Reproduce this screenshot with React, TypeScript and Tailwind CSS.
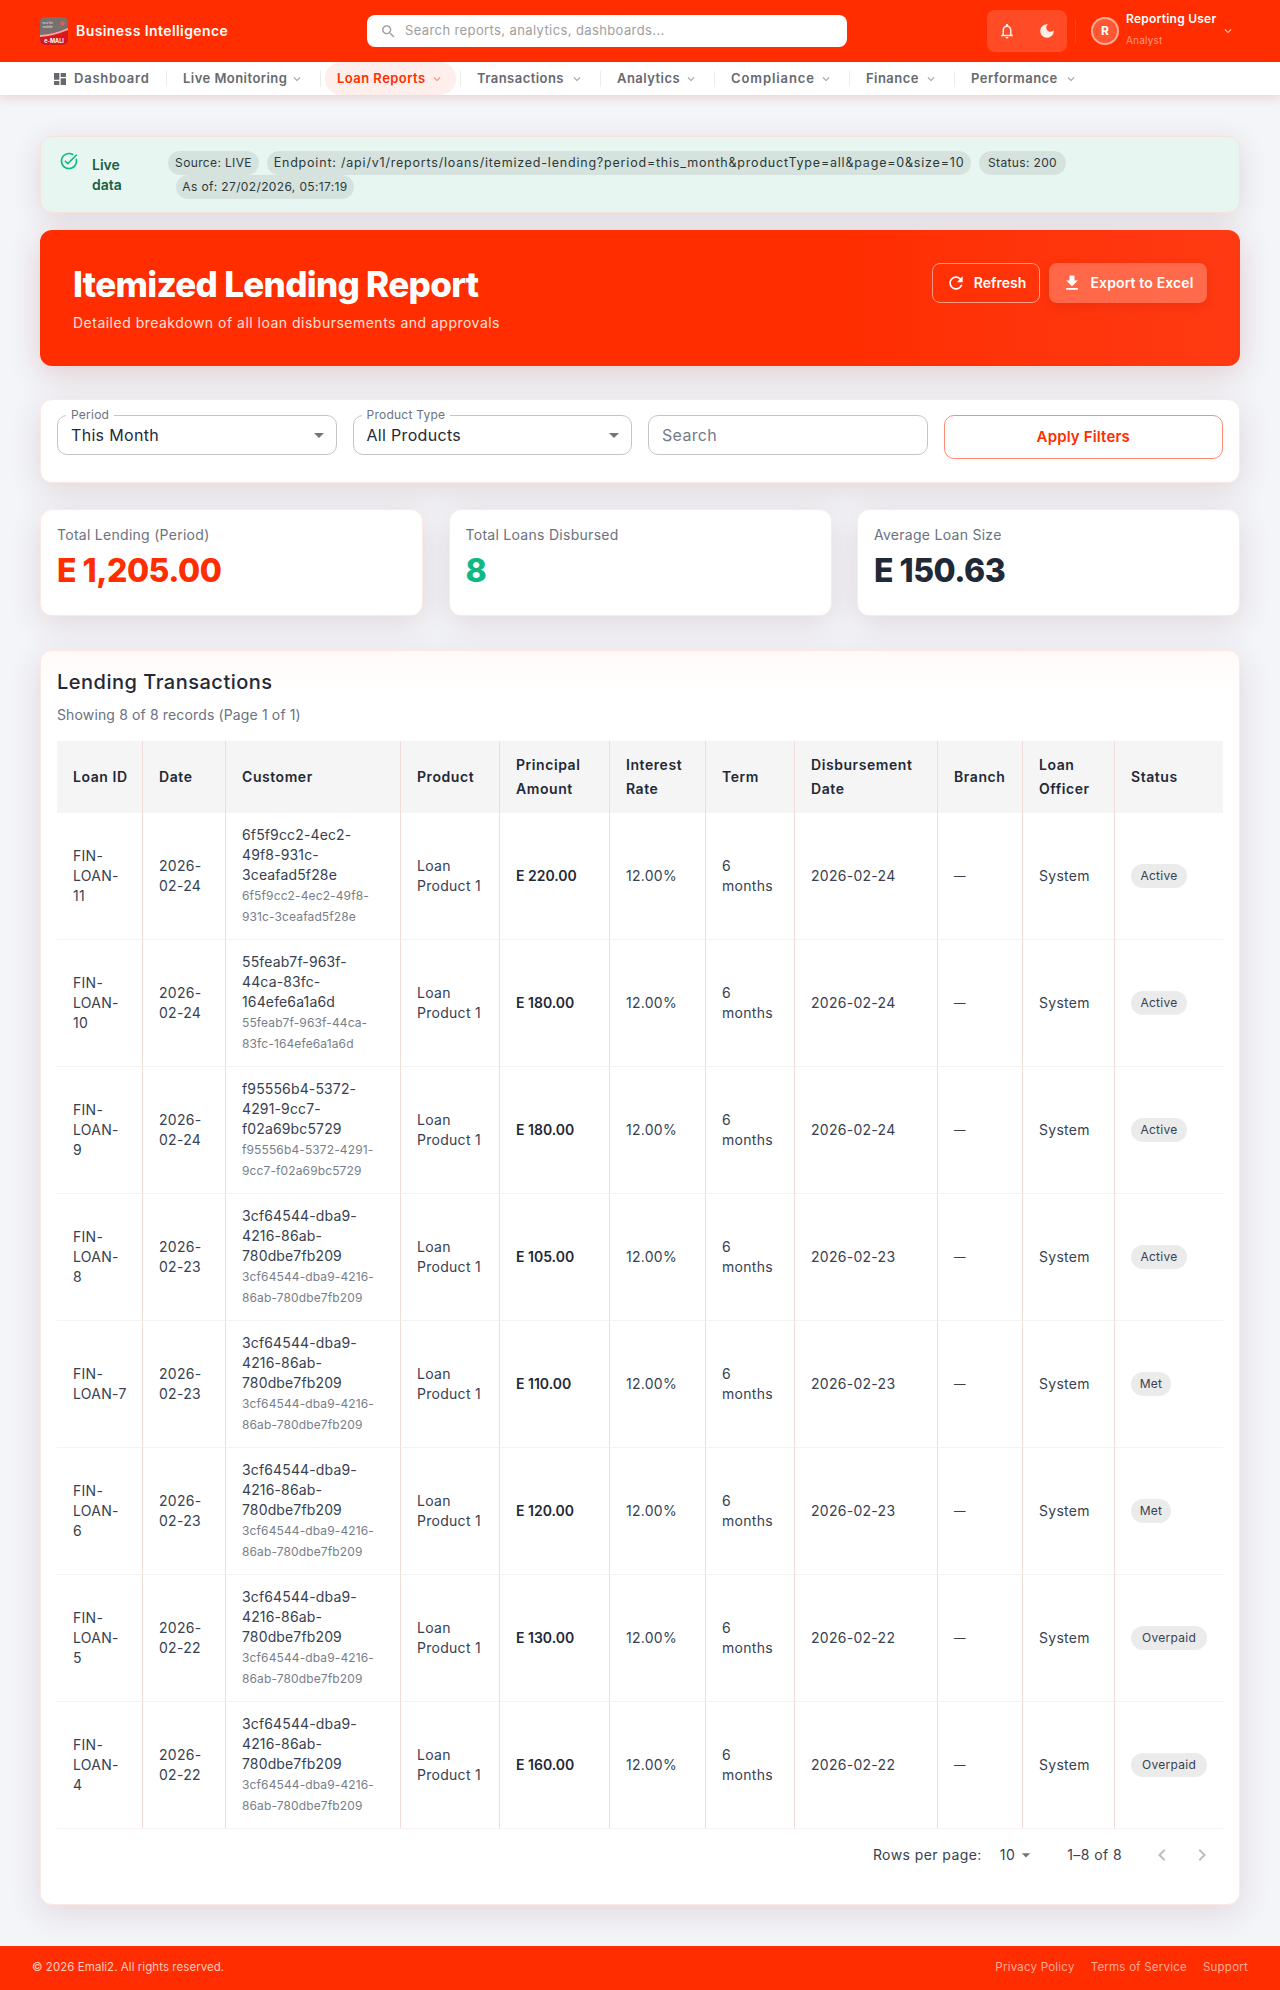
import React from "react";

const PATHS = {
  dashboard: "M3 13h8V3H3v10zm0 8h8v-6H3v6zm10 0h8V11h-8v10zm0-18v6h8V3h-8z",
  bell: "M12 22c1.1 0 2-.9 2-2h-4c0 1.1.9 2 2 2zm6-6v-5c0-3.07-1.63-5.64-4.5-6.32V4c0-.83-.67-1.5-1.5-1.5s-1.5.67-1.5 1.5v.68C7.64 5.36 6 7.92 6 11v5l-2 2v1h16v-1l-2-2zm-2 1H8v-6c0-2.48 1.51-4.5 4-4.5s4 2.02 4 4.5v6z",
  moon: "M12 3c-4.97 0-9 4.03-9 9s4.03 9 9 9 9-4.03 9-9c0-.46-.04-.92-.1-1.36-.98 1.37-2.58 2.26-4.4 2.26-2.98 0-5.4-2.42-5.4-5.4 0-1.81.89-3.42 2.26-4.4-.44-.06-.9-.1-1.36-.1z",
  refresh: "M17.65 6.35C16.2 4.9 14.21 4 12 4c-4.42 0-7.99 3.58-7.99 8s3.57 8 7.99 8c3.73 0 6.84-2.55 7.73-6h-2.08c-.82 2.33-3.04 4-5.65 4-3.31 0-6-2.69-6-6s2.69-6 6-6c1.66 0 3.14.69 4.22 1.78L13 11h7V4l-2.35 2.35z",
  download: "M19 9h-4V3H9v6H5l7 7 7-7zM5 18v2h14v-2H5z",
  taskAlt: "M22 5.18 10.59 16.6l-4.24-4.24 1.41-1.41 2.83 2.83 10-10L22 5.18zm-2.21 5.04c.13.57.21 1.17.21 1.78 0 4.42-3.58 8-8 8s-8-3.58-8-8 3.58-8 8-8c1.58 0 3.04.46 4.28 1.25l1.44-1.44C16.1 2.67 14.13 2 12 2 6.48 2 2 6.48 2 12s4.48 10 10 10 10-4.48 10-10c0-1.19-.22-2.33-.6-3.39l-1.61 1.61z",
  search: "M15.5 14h-.79l-.28-.27C15.41 12.59 16 11.11 16 9.5 16 5.91 13.09 3 9.5 3S3 5.91 3 9.5 5.91 16 9.5 16c1.61 0 3.09-.59 4.23-1.57l.27.28v.79l5 4.99L20.49 19l-4.99-5zm-6 0C7.01 14 5 11.99 5 9.5S7.01 5 9.5 5 14 7.01 14 9.5 11.99 14 9.5 14z",
  expand: "M16.59 8.59 12 13.17 7.41 8.59 6 10l6 6 6-6z",
  left: "M15.41 7.41 14 6l-6 6 6 6 1.41-1.41L10.83 12z",
  right: "M10 6 8.59 7.41 13.17 12l-4.58 4.59L10 18l6-6z",
  drop: "M7 10l5 5 5-5z",
};

function Icon({ name, className }: { name: keyof typeof PATHS; className: string }) {
  return (
    <svg viewBox="0 0 24 24" fill="currentColor" className={className}>
      <path d={PATHS[name]} />
    </svg>
  );
}

function Logo() {
  return (
    <svg viewBox="0 0 28 28" className="h-7 w-7 shrink-0">
      <rect width="28" height="28" rx="5" fill="#77706f" />
      <path d="M0 19 L28 12 V23 A5 5 0 0 1 23 28 H5 A5 5 0 0 1 0 23 Z" fill="#d8161d" />
      <path d="M0 18 Q14 17 28 11 V13 Q14 19 0 20 Z" fill="#f4a3a0" />
      <circle cx="22.5" cy="6.5" r="2.2" fill="#e85a50" />
      <text x="2.5" y="6.6" fontSize="3.2" fill="#e8e8e8" fontFamily="Inter, sans-serif">eco fin</text>
      <text x="2.5" y="10.6" fontSize="3.2" fill="#e8e8e8" fontFamily="Inter, sans-serif">mobile</text>
      <text x="14" y="25.5" fontSize="5.5" fontWeight="700" textAnchor="middle" fill="#fff" fontFamily="Inter, sans-serif">e-MALI</text>
    </svg>
  );
}

const NAV_ITEMS = [
  { label: "Live Monitoring", w: "w-[102px] tracking-[0.035em]" },
  { label: "Loan Reports", w: "w-[88px] tracking-[0.035em]", active: true },
  { label: "Transactions", w: "w-[88px] tracking-[0.035em]" },
  { label: "Analytics", w: "w-[62px] tracking-[0.035em]" },
  { label: "Compliance", w: "w-[83px] tracking-[0.07em]" },
  { label: "Finance", w: "w-[53px] tracking-[0.035em]" },
  { label: "Performance", w: "w-[88px] tracking-[0.035em]" },
];

function Header() {
  return (
    <header className="flex h-[62px] items-center bg-[#ff2d00] pl-10 text-white">
      <div className="flex w-[327px] items-center gap-2">
        <Logo />
        <span className="text-sm font-semibold tracking-[0.03em]">Business Intelligence</span>
      </div>
      <div className="flex h-8 w-[480px] items-center rounded-lg bg-white pl-[13px]">
        <Icon name="search" className="h-[17px] w-[17px] text-[#9e9e9e]" />
        <span className="ml-2 text-[13px] tracking-[0.03em] text-[#9e9e9e]">Search reports, analytics, dashboards...</span>
      </div>
      <div className="ml-[140px] flex h-[42px] w-[80px] items-center justify-between rounded-lg bg-white/15 px-[11px]">
        <Icon name="bell" className="h-[18px] w-[18px] opacity-90" />
        <Icon name="moon" className="h-[18px] w-[18px] opacity-90" />
      </div>
      <div className="ml-2 h-6 w-px bg-white/10" />
      <div className="ml-[15px] flex h-7 w-7 items-center justify-center rounded-full border-2 border-white/50 bg-white/20 text-xs font-bold">R</div>
      <div className="ml-[7px] flex h-[42px] w-[96px] flex-col">
        <span className="text-xs leading-[18px] font-semibold tracking-[0.02em]">Reporting User</span>
        <span className="mt-[5px] text-[10px] leading-[14px] tracking-[0.02em] text-white/50">Analyst</span>
      </div>
      <Icon name="expand" className="ml-[-1px] h-[14px] w-[14px] text-white/70" />
    </header>
  );
}

function NavBar() {
  return (
    <nav className="relative flex h-[33px] items-center bg-white pl-[42px] shadow-[0_3px_10px_rgba(190,60,50,0.18)]">
      <div className="flex h-[33px] items-center gap-[6px] pr-[13px] pl-3 text-[13px] font-semibold text-[#66696e]">
        <Icon name="dashboard" className="-ml-[2px] h-4 w-4" />
        <span className="w-[75px] tracking-[0.06em] whitespace-nowrap">Dashboard</span>
      </div>
      {NAV_ITEMS.map((item) => (
        <React.Fragment key={item.label}>
          <div className="mx-1 h-4 w-px bg-[#ececec]" />
          <div className={`flex h-[33px] items-center gap-[5px] rounded-2xl px-3 text-[13px] font-semibold ${item.active ? "bg-[#ffefec] text-[#ff2d00]" : "text-[#66696e]"}`}>
            <span className={`${item.w} whitespace-nowrap`}>{item.label}</span>
            <Icon name="expand" className={`h-[14px] w-[14px] ${item.active ? "text-[#ff8a75]" : "text-[#a0a0a0]"}`} />
          </div>
        </React.Fragment>
      ))}
    </nav>
  );
}

function Pill({ children, className }: { children: React.ReactNode; className: string }) {
  return <span className={`flex h-6 items-center justify-center rounded-full bg-black/[0.08] whitespace-nowrap text-[#2b3a36] ${className}`}>{children}</span>;
}

function LiveBanner() {
  return (
    <div className="flex rounded-xl border border-[#f6e4da] bg-[#e8f6f1] pt-[14px] pr-4 pb-[13px] pl-[18px] shadow-[0_6px_28px_rgba(120,40,50,0.14)]">
      <Icon name="taskAlt" className="h-[20px] w-[20px] shrink-0 text-[#10b981]" />
      <div className="ml-[13px] w-[76px] shrink-0 pt-[4px] text-sm leading-5 font-semibold text-[#1b5e45]">Live<br />data</div>
      <div className="flex flex-wrap">
        <Pill className="w-[91px] text-xs tracking-[0.03em]">Source: LIVE</Pill>
        <Pill className="ml-2 w-[704px] text-[12.5px] tracking-[0.064em]">Endpoint: /api/v1/reports/loans/itemized-lending?period=this_month&amp;productType=all&amp;page=0&amp;size=10</Pill>
        <Pill className="ml-2 w-[87px] text-xs tracking-[0.03em]">Status: 200</Pill>
        <Pill className="ml-2 w-[178px] text-xs tracking-[0.03em]">As of: 27/02/2026, 05:17:19</Pill>
      </div>
    </div>
  );
}

function Hero() {
  return (
    <section className="mt-[17px] flex items-start justify-between rounded-xl bg-gradient-to-r from-[#ff2d00] from-65% to-[#ff3a12] px-[33px] pt-[33px] pb-[32px] text-white shadow-[0_8px_32px_rgba(150,40,40,0.2)]">
      <div>
        <h1 className="text-[35px] leading-[42px] font-extrabold tracking-[-0.02em]">Itemized Lending Report</h1>
        <p className="mt-[7px] text-sm leading-[22px] tracking-[0.035em] text-white/85">Detailed breakdown of all loan disbursements and approvals</p>
      </div>
      <div className="flex gap-[9px]">
        <button className="flex h-10 w-[108px] items-center justify-center gap-2 rounded-lg border border-white/50 text-sm font-semibold">
          <Icon name="refresh" className="h-5 w-5" />
          Refresh
        </button>
        <button className="flex h-10 w-[158px] items-center justify-center gap-2 rounded-lg bg-white/25 text-sm font-semibold tracking-[0.01em] shadow-[0_3px_8px_rgba(150,30,10,0.2)]">
          <Icon name="download" className="h-5 w-5" />
          Export to Excel
        </button>
      </div>
    </section>
  );
}

function SelectField({ label, value }: { label: string; value: string }) {
  return (
    <div className="relative flex h-10 items-center rounded-[10px] border border-[#c4c4c8] px-[13px] text-base tracking-[0.02em] text-[#1f2937]">
      <span className="absolute -top-[9px] left-[8px] bg-white px-[5px] text-xs leading-4 tracking-[0.02em] text-[#6b7280]">{label}</span>
      {value}
      <Icon name="drop" className="absolute top-[7px] right-[5px] h-6 w-6 text-[#757575]" />
    </div>
  );
}

function Filters() {
  return (
    <section className="mt-[33px] grid grid-cols-4 gap-4 rounded-xl border border-[#ffe8e2] bg-white px-4 pt-[15px] pb-[23px] shadow-[0_8px_32px_rgba(120,40,50,0.14)]">
      <SelectField label="Period" value="This Month" />
      <SelectField label="Product Type" value="All Products" />
      <div className="flex h-10 items-center rounded-[10px] border border-[#c4c4c8] px-[13px] text-base tracking-[0.02em] text-[#757b85]">Search</div>
      <button className="h-11 rounded-[10px] border border-[#ff8a75] text-[15px] font-semibold tracking-[0.01em] text-[#ff2d00]">Apply Filters</button>
    </section>
  );
}

function StatCard({ label, value, color }: { label: string; value: string; color: string }) {
  return (
    <div className="rounded-xl border border-[#ffe8e2] bg-white pt-[15px] pb-6 pl-4 shadow-[0_8px_32px_rgba(120,40,50,0.14)]">
      <p className="text-sm leading-5 tracking-[0.02em] text-[#6b7280]">{label}</p>
      <p className={`mt-[6px] text-[32px] leading-10 font-extrabold tracking-[-0.015em] ${color}`}>{value}</p>
    </div>
  );
}

const HEADERS = [
  { label: <>Loan ID</>, w: "w-[86px]" },
  { label: <>Date</>, w: "w-[83px]" },
  { label: <>Customer</>, w: "w-[175px]" },
  { label: <>Product</>, w: "w-[99px]" },
  { label: <>Principal<br />Amount</>, w: "w-[110px]" },
  { label: <>Interest<br />Rate</>, w: "w-[96px]" },
  { label: <>Term</>, w: "w-[89px]" },
  { label: <>Disbursement<br />Date</>, w: "w-[143px]" },
  { label: <>Branch</>, w: "w-[85px]" },
  { label: <>Loan<br />Officer</>, w: "w-[92px]" },
  { label: <>Status</>, w: "w-auto" },
];

const ROWS = [
  { id: ["FIN-", "LOAN-", "11"], date: "2026-02-24", a: ["6f5f9cc2-4ec2-", "49f8-931c-", "3ceafad5f28e"], b: ["6f5f9cc2-4ec2-49f8-", "931c-3ceafad5f28e"], amount: "E 220.00", status: "Active" },
  { id: ["FIN-", "LOAN-", "10"], date: "2026-02-24", a: ["55feab7f-963f-", "44ca-83fc-", "164efe6a1a6d"], b: ["55feab7f-963f-44ca-", "83fc-164efe6a1a6d"], amount: "E 180.00", status: "Active" },
  { id: ["FIN-", "LOAN-", "9"], date: "2026-02-24", a: ["f95556b4-5372-", "4291-9cc7-", "f02a69bc5729"], b: ["f95556b4-5372-4291-", "9cc7-f02a69bc5729"], amount: "E 180.00", status: "Active" },
  { id: ["FIN-", "LOAN-", "8"], date: "2026-02-23", a: ["3cf64544-dba9-", "4216-86ab-", "780dbe7fb209"], b: ["3cf64544-dba9-4216-", "86ab-780dbe7fb209"], amount: "E 105.00", status: "Active" },
  { id: ["FIN-", "LOAN-7"], date: "2026-02-23", a: ["3cf64544-dba9-", "4216-86ab-", "780dbe7fb209"], b: ["3cf64544-dba9-4216-", "86ab-780dbe7fb209"], amount: "E 110.00", status: "Met" },
  { id: ["FIN-", "LOAN-", "6"], date: "2026-02-23", a: ["3cf64544-dba9-", "4216-86ab-", "780dbe7fb209"], b: ["3cf64544-dba9-4216-", "86ab-780dbe7fb209"], amount: "E 120.00", status: "Met" },
  { id: ["FIN-", "LOAN-", "5"], date: "2026-02-22", a: ["3cf64544-dba9-", "4216-86ab-", "780dbe7fb209"], b: ["3cf64544-dba9-4216-", "86ab-780dbe7fb209"], amount: "E 130.00", status: "Overpaid" },
  { id: ["FIN-", "LOAN-", "4"], date: "2026-02-22", a: ["3cf64544-dba9-", "4216-86ab-", "780dbe7fb209"], b: ["3cf64544-dba9-4216-", "86ab-780dbe7fb209"], amount: "E 160.00", status: "Overpaid" },
];

const STATUS_WIDTH: Record<string, string> = { Active: "w-[56px]", Met: "w-[40px]", Overpaid: "w-[76px]" };

function Lines({ lines }: { lines: string[] }) {
  return (
    <>
      {lines.map((line) => (
        <span key={line} className="block whitespace-nowrap">{line}</span>
      ))}
    </>
  );
}

const TD = "border-r border-b border-r-[#f0dcd8] border-b-[#f6f2f1] px-4 py-3 align-middle last:border-r-0";
const TH = "border-r border-r-[#f0dcd8] bg-[#f5f5f5] px-4 py-3 text-left align-middle text-sm leading-6 font-semibold tracking-[0.04em] whitespace-nowrap text-[#1f2937] last:border-r-0";

function LendingTable() {
  return (
    <section className="mt-[34px] rounded-xl border border-[#ffe8e2] bg-gradient-to-b from-[#fffaf8] to-white to-[40px] px-4 pt-[17px] pb-[23px] shadow-[0_8px_32px_rgba(120,40,50,0.14)]">
      <h2 className="text-xl leading-7 font-medium tracking-[0.025em] text-[#1f2937]">Lending Transactions</h2>
      <p className="mt-[9px] text-sm leading-5 tracking-[0.01em] text-[#6b7280]">Showing 8 of 8 records (Page 1 of 1)</p>
      <table className="mt-4 w-full table-fixed border-separate border-spacing-0 text-sm leading-5 tracking-[0.02em] text-[#374151]">
        <colgroup>
          {HEADERS.map((h, i) => (
            <col key={i} className={h.w} />
          ))}
        </colgroup>
        <thead>
          <tr>
            {HEADERS.map((h, i) => (
              <th key={i} className={TH}>{h.label}</th>
            ))}
          </tr>
        </thead>
        <tbody>
          {ROWS.map((row) => (
            <tr key={row.id.join("")}>
              <td className={TD}><Lines lines={row.id} /></td>
              <td className={TD}><Lines lines={[row.date.slice(0, 5), row.date.slice(5)]} /></td>
              <td className={TD}>
                <span className="block tracking-[0.01em]"><Lines lines={row.a} /></span>
                <span className="block text-xs leading-[21px] tracking-[0.01em] text-[#787e89]"><Lines lines={row.b} /></span>
              </td>
              <td className={TD}>Loan<br />Product 1</td>
              <td className={`${TD} font-semibold tracking-normal text-[#1f2937]`}>{row.amount}</td>
              <td className={TD}>12.00%</td>
              <td className={TD}>6<br />months</td>
              <td className={TD}>{row.date}</td>
              <td className={`${TD} text-[11.5px]`}>—</td>
              <td className={TD}>System</td>
              <td className={TD}>
                <span className={`flex h-6 items-center justify-center rounded-full bg-[#ebebeb] text-xs ${STATUS_WIDTH[row.status]}`}>{row.status}</span>
              </td>
            </tr>
          ))}
        </tbody>
      </table>
      <div className="flex h-[52px] items-center justify-end text-sm tracking-[0.03em] text-[#374151]">
        <span>Rows per page:</span>
        <span className="ml-[18px]">10</span>
        <Icon name="drop" className="ml-[1px] h-5 w-5 text-[#757575]" />
        <span className="ml-[31px]">1–8 of 8</span>
        <Icon name="left" className="ml-[28px] h-6 w-6 text-[#bdbdbd]" />
        <Icon name="right" className="mr-[9px] ml-[16px] h-6 w-6 text-[#bdbdbd]" />
      </div>
    </section>
  );
}

function Footer() {
  return (
    <footer className="flex h-11 items-center justify-between bg-[#ff2d00] px-8 text-[11.5px] text-white/60">
      <span className="tracking-[0.005em] text-white/75">© 2026 Emali2. All rights reserved.</span>
      <div className="flex gap-4 tracking-[0.02em]">
        <span>Privacy Policy</span>
        <span>Terms of Service</span>
        <span>Support</span>
      </div>
    </footer>
  );
}

export default function App() {
  return (
    <div className="min-h-[1990px] bg-[#f3f5f9] font-[Inter,sans-serif]">
      <Header />
      <NavBar />
      <main className="px-10 pt-[41px] pb-[41px]">
        <LiveBanner />
        <Hero />
        <Filters />
        <section className="mt-[26px] grid grid-cols-3 gap-[25.5px]">
          <StatCard label="Total Lending (Period)" value="E 1,205.00" color="text-[#ff2d00]" />
          <StatCard label="Total Loans Disbursed" value="8" color="text-[#10b981]" />
          <StatCard label="Average Loan Size" value="E 150.63" color="text-[#1f2937]" />
        </section>
        <LendingTable />
      </main>
      <Footer />
    </div>
  );
}
